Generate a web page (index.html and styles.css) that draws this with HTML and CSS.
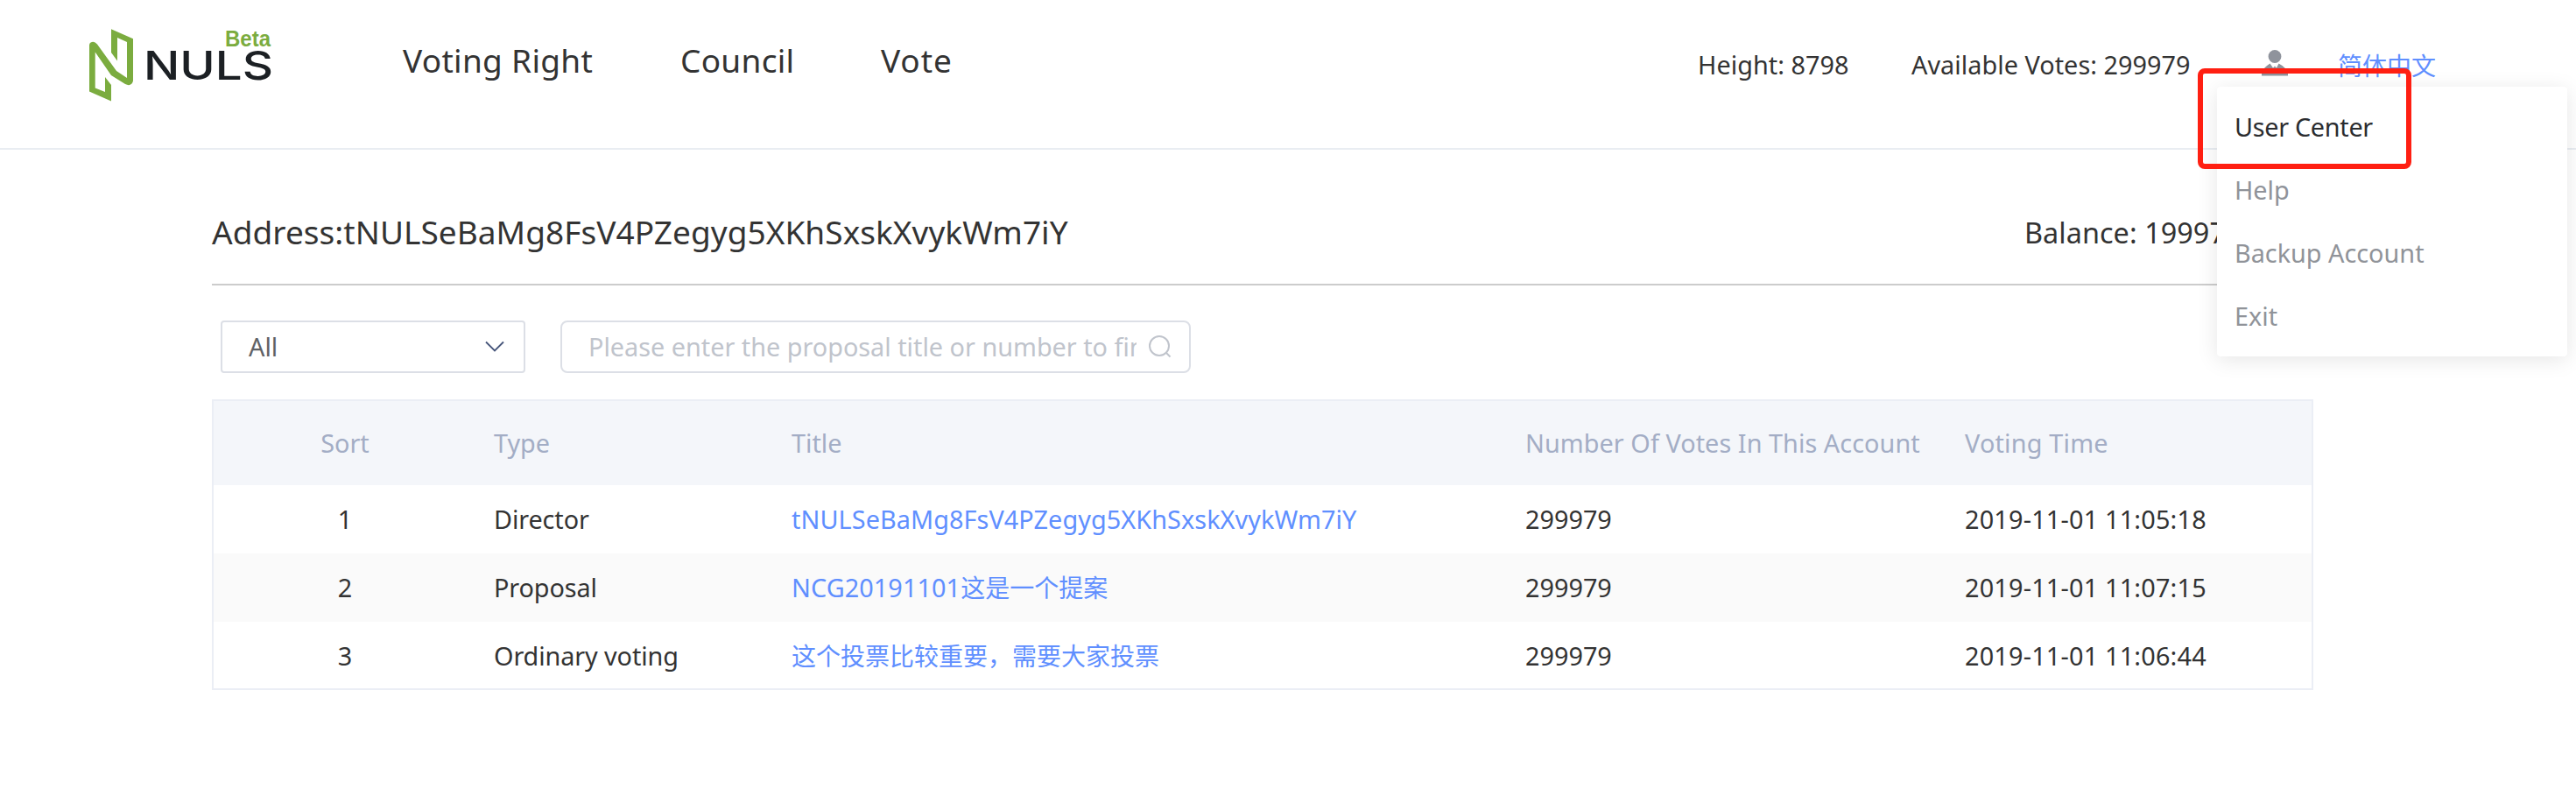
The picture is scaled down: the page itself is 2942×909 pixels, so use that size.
FILE: index.html
```html
<!DOCTYPE html>
<html lang="en">
<head>
<meta charset="utf-8">
<title>NULS</title>
<link rel="stylesheet" href="styles.css">
</head>
<body>
<header class="header">
  <svg class="logo" width="214" height="88" viewBox="0 0 214 88">
    <path fill="#7bac3f" d="M27 3.300 L52 14.200 V62 Q51.500 66 48 67 Q46 67.500 43 66 L27 56 L8.700 29.500 V70.500 L20 75 V58 L27 67 V85.500 L2 74.500 V22 Q2 18.500 5 18 Q8 17 11 20.500 L33 51 L45 59 V18 L34 13 V39.500 L27 30 Z"/>
    <text class="wordmark" x="64" y="60.500" textLength="148" lengthAdjust="spacingAndGlyphs">NULS</text>
    <text class="beta" x="157" y="23" textLength="52" lengthAdjust="spacingAndGlyphs">Beta</text>
  </svg>
  <a class="nav nav-voting">Voting Right</a>
  <a class="nav nav-council">Council</a>
  <a class="nav nav-vote">Vote</a>
  <span class="stat">Height: 8798</span>
  <span class="stat">Available Votes: 299979</span>
  <svg class="user" width="30" height="30" viewBox="0 0 30 30" fill="#8f939c">
    <circle cx="15" cy="7.500" r="7.400"/>
    <path d="M0 29.500 V26.500 Q1 21 9.500 15.500 L13 20.500 L15 18.500 L17 20.500 L19.500 15.500 Q28 20 30 26.500 V29.500 Z"/>
  </svg>
  <a class="lang">简体中文</a>
</header>

<main class="page">
  <section class="account">
    <h1 class="address">Address:tNULSeBaMg8FsV4PZegyg5XKhSxskXvykWm7iY</h1>
    <div class="balance">Balance: 19997</div>
  </section>

  <section class="filters">
    <div class="select">
      <span>All</span>
      <svg width="22" height="14" viewBox="0 0 22 14"><path d="M1 1.500 L11 11.500 L21 1.500" fill="none" stroke="#46557a" stroke-width="1.800"/></svg>
    </div>
    <div class="search">
      <span class="placeholder">Please enter the proposal title or number to find</span>
      <svg width="26" height="26" viewBox="0 0 26 26" fill="none" stroke="#c0c4cc" stroke-width="2"><circle cx="12" cy="12" r="11"/><path d="M19.500 19.500 L24.500 24.500"/></svg>
    </div>
  </section>

  <section class="table">
    <div class="row head">
      <span class="sort">Sort</span><span>Type</span><span>Title</span><span class="votes">Number Of Votes In This Account</span><span class="time-head">Voting Time</span>
    </div>
    <div class="row">
      <span class="sort">1</span><span class="type">Director</span><a class="link">tNULSeBaMg8FsV4PZegyg5XKhSxskXvykWm7iY</a><span>299979</span><span class="time">2019-11-01 11:05:18</span>
    </div>
    <div class="row striped">
      <span class="sort">2</span><span class="type">Proposal</span><a class="link">NCG20191101<span class="cjk">这是一个提案</span></a><span>299979</span><span class="time">2019-11-01 11:07:15</span>
    </div>
    <div class="row">
      <span class="sort">3</span><span class="type">Ordinary voting</span><a class="link"><span class="cjk">这个投票比较重要，需要大家投票</span></a><span>299979</span><span class="time">2019-11-01 11:06:44</span>
    </div>
  </section>
</main>

<nav class="menu">
  <a class="item active">User Center</a>
  <a class="item">Help</a>
  <a class="item">Backup Account</a>
  <a class="item">Exit</a>
</nav>
<div class="highlight"></div>
</body>
</html>
```
FILE: styles.css
```css
* { box-sizing: border-box; }

body {
  margin: 0;
  height: 909px;
  position: relative;
  overflow: hidden;
  background: #fff;
  color: #333;
  font-family: "Noto Sans", "Noto Sans CJK SC", sans-serif;
  font-size: 28.8px;
  line-height: 40px;
}

.header {
  display: grid;
  grid-template-columns: 360px 317px 229px 933px 244px 400px 87px 1fr;
  align-items: start;
  height: 171px;
  padding-left: 100px;
  border-bottom: 2px solid #e9edf2;
  white-space: nowrap;
}

.logo { margin-top: 30px; }
.wordmark { font: 500 45.500px Inter, sans-serif; fill: #1c2024; }
.beta { font: bold 25px "Liberation Sans", Arial, sans-serif; fill: #7bac3f; }

.nav { margin-top: 49px; font-size: 37px; }
.nav-voting { letter-spacing: 0.3px; }
.nav-council { letter-spacing: 0.3px; }
.nav-vote { letter-spacing: 0.9px; }
.stat { margin-top: 54px; letter-spacing: 0.04px; }
.user { margin-top: 56.5px; }
.lang {
  margin-top: 54px;
  font-family: "Noto Sans CJK SC", sans-serif;
  font-size: 28px;
  color: #608fff;
}

.page { width: 2400px; margin-left: 242px; }

.account {
  display: flex;
  justify-content: space-between;
  align-items: center;
  height: 155px;
  padding-top: 34px;
  border-bottom: 2px solid #ccc;
  white-space: nowrap;
}
.address { margin: 0; font-size: 37px; font-weight: 400; letter-spacing: 0.05px; }
.balance { width: 330px; font-size: 32.4px; letter-spacing: 0.05px; }

.filters { display: flex; gap: 40px; padding: 40px 10px 30px; }
.select, .search {
  display: flex;
  align-items: center;
  justify-content: space-between;
  height: 60px;
  border: 2px solid #dcdfe6;
}
.select { width: 348px; padding: 0 22px 0 30px; border-radius: 4px; color: #606266; }
.search { width: 720px; padding: 0 20px 0 30px; border-radius: 8px; }
.placeholder {
  width: 626px;
  overflow: hidden;
  white-space: nowrap;
  color: #c0c4cc;
}

.table { border: 2px solid #ebeef5; height: 332px; overflow: hidden; }
.row {
  display: grid;
  grid-template-columns: 300px 340px 838px 502px 1fr;
  align-items: center;
  height: 78px;
  padding-left: 20px;
  white-space: nowrap;
}
.head { height: 96px; background: #f4f6fa; color: #a3adc5; }
.striped { background: #fafafa; }
.sort { padding-right: 40px; text-align: center; }
.type { letter-spacing: -0.1px; }
.link { color: #608fff; letter-spacing: 0.08px; }
.votes { letter-spacing: 0.06px; }
.time-head { letter-spacing: 0.2px; }
.time { letter-spacing: 0.2px; }
.cjk { font-family: "Noto Sans CJK SC", sans-serif; font-size: 28px; line-height: 1; letter-spacing: 0; }

.menu {
  position: absolute;
  left: 2532px;
  top: 99px;
  width: 400px;
  height: 308px;
  padding: 10px 0 0 20px;
  border-radius: 4px;
  background: #fff;
  box-shadow: 0 4px 24px rgba(0, 0, 0, 0.1);
}
.item { display: block; line-height: 72px; color: #909399; }
.active { color: #2b2d30; letter-spacing: -0.3px; }

.highlight {
  position: absolute;
  left: 2510px;
  top: 78px;
  width: 244px;
  height: 115px;
  border: 6px solid #ff1f12;
  border-radius: 8px;
}
```
